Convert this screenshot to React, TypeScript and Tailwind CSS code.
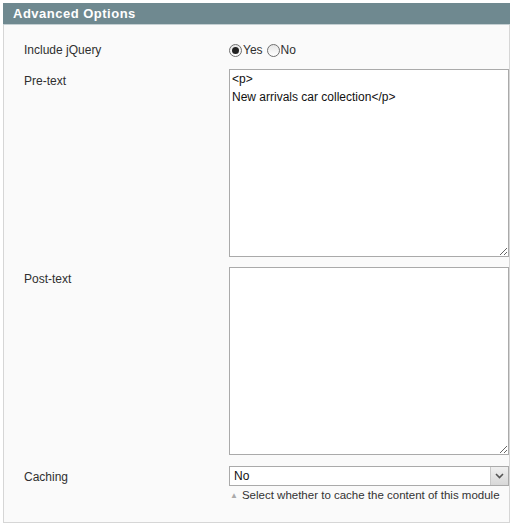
import { useState } from 'react';

function Radio({ checked, onClick }: { checked: boolean; onClick: () => void }) {
  return (
    <span
      onClick={onClick}
      className="inline-flex h-[13px] w-[13px] items-center justify-center rounded-full border border-[#6f6f6f] bg-gradient-to-b from-[#e6e6e6] to-white"
    >
      {checked && <span className="h-[7px] w-[7px] rounded-full bg-[#222]" />}
    </span>
  );
}

export default function App() {
  const [jquery, setJquery] = useState(true);
  const [preText, setPreText] = useState('<p>\nNew arrivals car collection</p>');
  const [postText, setPostText] = useState('');
  const [caching, setCaching] = useState('No');

  return (
    <div className="px-[3px] pt-[3px] text-[12px] text-[#2f2f2f]" style={{ fontFamily: '"Liberation Sans", Arial, sans-serif' }}>
      <div className="w-[507px] border-x border-b border-[#d6d6d6] bg-[#fafafa]">
        <div className="-mx-px flex h-[22px] items-center border-b border-[#c4cfd2] bg-[#6f8990] pl-[10px] text-[13px] font-bold tracking-[0.5px] text-white">
          Advanced Options
        </div>

        <div className="pb-[18px] pt-[16px]">
          <div className="flex items-center">
            <label className="w-[225px] pl-[20px]">Include jQuery</label>
            <div className="flex items-center">
              <Radio checked={jquery} onClick={() => setJquery(true)} />
              <span className="ml-[1px] mr-[4px]">Yes</span>
              <Radio checked={!jquery} onClick={() => setJquery(false)} />
              <span className="ml-[1px]">No</span>
            </div>
          </div>

          <div className="mt-[10px] flex items-start">
            <label className="w-[225px] pl-[20px] pt-[3px]">Pre-text</label>
            <textarea
              value={preText}
              onChange={(e) => setPreText(e.target.value)}
              className="h-[188px] w-[280px] resize border border-[#aaa] bg-white px-[2px] pt-0 leading-[18px] text-[#111] outline-none"
            />
          </div>

          <div className="mt-[10px] flex items-start">
            <label className="w-[225px] pl-[20px] pt-[3px]">Post-text</label>
            <textarea
              value={postText}
              onChange={(e) => setPostText(e.target.value)}
              className="h-[188px] w-[280px] resize border border-[#aaa] bg-white px-[2px] pt-0 leading-[18px] text-[#111] outline-none"
            />
          </div>

          <div className="mt-[11px] flex items-start">
            <label className="w-[225px] pl-[20px] pt-[2px]">Caching</label>
            <div className="w-[280px]">
              <div className="relative h-[20px] border border-[#aaa] bg-white">
                <select
                  value={caching}
                  onChange={(e) => setCaching(e.target.value)}
                  className="h-full w-full appearance-none bg-transparent pl-[4px] text-[12px] text-[#111] outline-none"
                >
                  <option>No</option>
                  <option>Yes</option>
                </select>
                <span className="pointer-events-none absolute right-0 top-0 flex h-[18px] w-[18px] items-center justify-center border-l border-[#c8c8c8] bg-gradient-to-b from-[#f0f0f0] to-[#d8d8d8]">
                  <svg width="9" height="6" viewBox="0 0 9 6">
                    <path d="M1 1 L4.5 4.5 L8 1" fill="none" stroke="#555" strokeWidth="1.6" />
                  </svg>
                </span>
              </div>
              <div className="mt-[1px] flex items-center text-[11.5px] text-[#333]">
                <span className="ml-[1px] mr-[4px] text-[8px] text-[#aaa]">▲</span>
                Select whether to cache the content of this module
              </div>
            </div>
          </div>
        </div>
      </div>
    </div>
  );
}
